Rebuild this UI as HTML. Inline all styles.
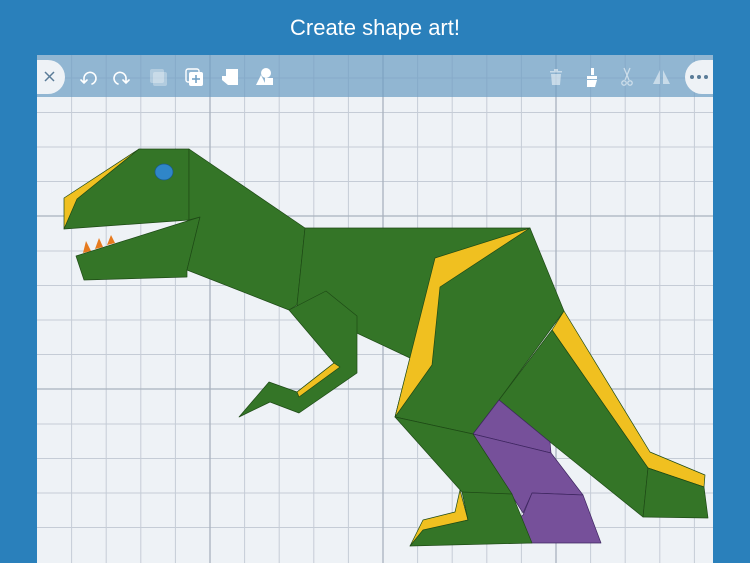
<!DOCTYPE html>
<html><head><style>
body{margin:0;width:750px;height:563px;background:#2a80bb;position:relative;overflow:hidden;font-family:"Liberation Sans",sans-serif}
.t{position:absolute;top:15px;left:0;width:750px;text-align:center;color:#fff;font-size:22px}
.c{position:absolute;left:37px;top:55px;width:676px;height:508px;background:#eef2f6;overflow:hidden}
</style></head><body>
<div class="t">Create shape art!</div>
<div class="c">
<svg width="676" height="508" viewBox="37 55 676 508" style="position:absolute;left:0;top:0">
<g stroke="#c5ccd6" stroke-width="1">
<path d="M71.6 55V563M106.2 55V563M140.8 55V563M175.4 55V563M244.6 55V563M279.2 55V563M313.8 55V563M348.4 55V563M417.6 55V563M452.2 55V563M486.8 55V563M521.4 55V563M590.6 55V563M625.2 55V563M659.8 55V563M694.4 55V563"/>
<path d="M37 78H713M37 112.5H713M37 147H713M37 181.5H713M37 251H713M37 285.5H713M37 320H713M37 354.5H713M37 424H713M37 458.5H713M37 493H713M37 527.5H713"/>
</g>
<g stroke="#a9b2be" stroke-width="1.3"><path d="M210 55V563M383 55V563M556 55V563M37 216H713M37 389H713"/></g>
<g stroke="#1e4a16" stroke-width="0.7" stroke-linejoin="round">
<polygon fill="#f0c020" points="64,198 139,149 77,200 64,229"/>
<polygon fill="#347527" points="64,229 77,199 139,149 189,149 189,220"/>
<polygon fill="#e67a1e" stroke="none" points="83,253 86,241 91,251"/>
<polygon fill="#e67a1e" stroke="none" points="95,249 99,238 103,247"/>
<polygon fill="#e67a1e" stroke="none" points="107,245 111,235 115,243"/>
<polygon fill="#347527" points="76,256 200,217 187,270 187,277 84,280"/>
<polygon fill="#347527" points="189,149 305,228 297,305 289,310 187,270 200,217 189,220"/>
<polygon fill="#347527" points="305,228 530,228 564,311 499,400 473,434 395,417 410,358 297,305"/>
<polygon fill="#347527" points="289,310 326,291 357,316 357,373 299,413 270,402 239,417 269,382 297,392 334,363"/>
<polygon fill="#f0c020" points="297,392 334,363 340,367 299,397"/>
<polygon fill="#f0c020" points="395,417 435,258 530,228 440,287 432,365"/>
<polygon fill="#f0c020" points="564,311 650,452 705,475 704,487 648,468 552,330"/>
<polygon fill="#347527" points="552,330 648,468 643,517 550,442 499,400"/>
<polygon fill="#347527" points="648,468 704,487 708,518 643,517"/>
<polygon fill="#76509a" stroke="#3e2660" points="499,400 550,442 551,453 473,434"/>
<polygon fill="#76509a" stroke="#3e2660" points="473,434 551,453 583,495 532,493 523,513"/>
<polygon fill="#76509a" stroke="#3e2660" points="532,493 583,495 601,543 482,543 523,515"/>
<polygon fill="#f0c020" points="410,546 423,520 455,512 460,490 468,520 425,532"/>
<polygon fill="#347527" points="395,417 473,434 512,494 532,543 410,546 423,530 468,520 462,492"/>
<line x1="462" y1="492" x2="512" y2="494"/>
<ellipse cx="164" cy="172" rx="9" ry="8" fill="#2f86c8" stroke="#1a5a8a"/>
</g>
<rect x="37" y="55" width="676" height="42" fill="#6d9ec4" opacity="0.72"/>
<path d="M37 60H48a17 17 0 0 1 0 34H37Z" fill="#eef2f6"/>
<path d="M45 72l9 9M54 72l-9 9" stroke="#5a7c98" stroke-width="1.5"/>
<path d="M713 60H702a17 17 0 0 0 0 34h11Z" fill="#eef2f6"/>
<g fill="#5a7c98"><circle cx="692" cy="77" r="2"/><circle cx="699" cy="77" r="2"/><circle cx="706" cy="77" r="2"/></g>
<g fill="none" stroke="#fff" stroke-width="1.6" stroke-linecap="round">
<path d="M84 83v-5a6 6 0 1 1 8 6M81 80l3 3 3-3"/>
<path d="M126 83v-5a6 6 0 1 0-8 6M123 80l3 3 3-3"/>
</g>
<rect x="150" y="69" width="14" height="14" rx="2" fill="#fff" opacity="0.3"/>
<rect x="153" y="72" width="14" height="14" rx="2" fill="#fff" opacity="0.3"/>
<rect x="186" y="69" width="13" height="13" rx="2" fill="none" stroke="#fff" stroke-width="1.4"/>
<rect x="189" y="72" width="14" height="14" rx="2" fill="#fff"/>
<path d="M196 75v8M192 79h8" stroke="#6d9ec4" stroke-width="1.5"/>
<path d="M222 69h16v16h-10l-6-5v-4h4v-7Z" fill="#fff"/>
<circle cx="266" cy="73" r="5" fill="#fff"/>
<path d="M256 85l5-10 5 10Z M265 78h8v7h-8Z" fill="#fff"/>
<g fill="#fff" opacity="0.5"><path d="M550 71h12v1.5h-12ZM554 69h4v2h-4ZM551 74h10l-1 11h-8Z"/></g>
<path d="M591 68h3v7h-3Z M587 76h10v3h-10Z M587 80h10l-2 7h-8Z" fill="#fff"/>
<g stroke="#fff" stroke-width="1.3" fill="none" opacity="0.55"><path d="M624 68l5 12M630 68l-5 12"/><circle cx="624" cy="83" r="2.2"/><circle cx="630" cy="83" r="2.2"/></g>
<g fill="#fff" opacity="0.5"><path d="M660 70v14h-7Z M663 70v14h7Z"/></g>
</svg>
</div>
</body></html>
